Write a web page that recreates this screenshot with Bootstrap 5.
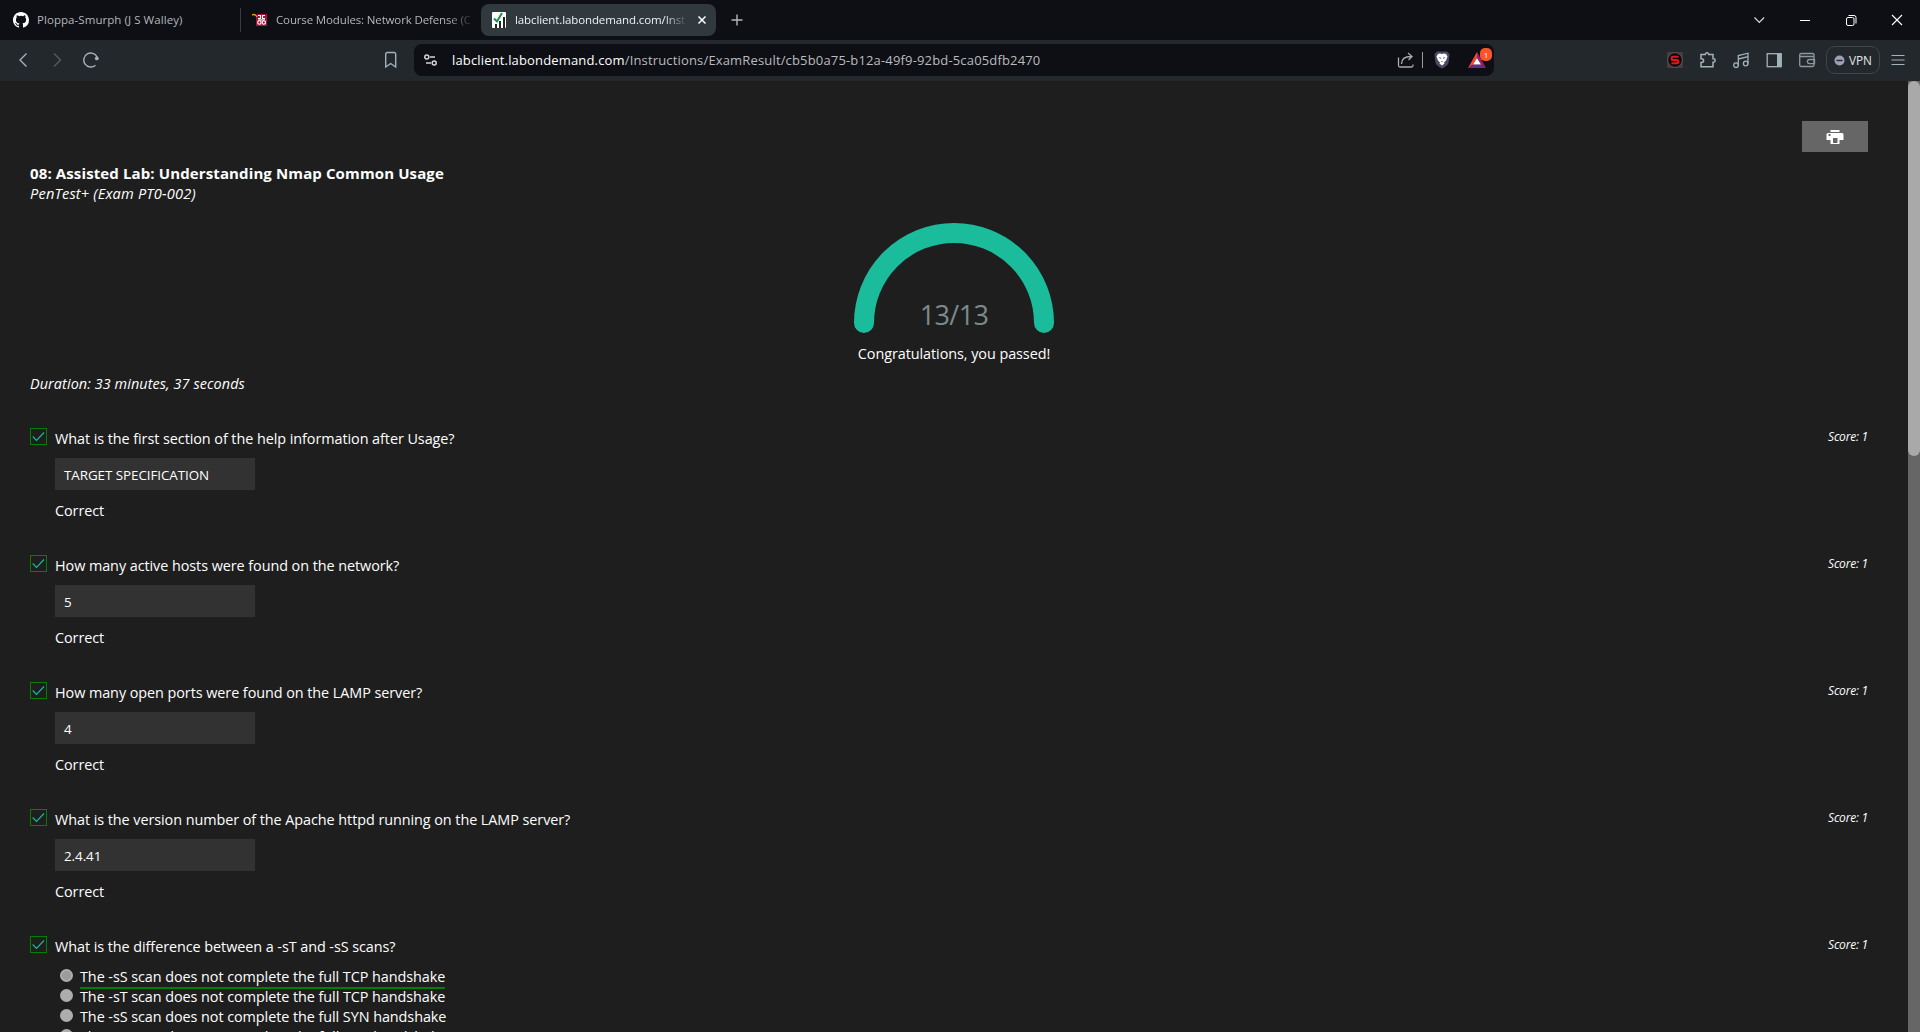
<!DOCTYPE html>
<html lang="en">
<head>
<meta charset="utf-8">
<title>Exam Result</title>
<link rel="stylesheet" href="https://cdn.jsdelivr.net/npm/bootstrap@5.3.0/dist/css/bootstrap.min.css">
<style>
html,body{height:100%;overflow:hidden}
body{background:#1e1e1e;color:#fff;font-family:"Open Sans","Noto Sans",sans-serif;font-size:14.4px;line-height:20px;letter-spacing:-.06px}
svg{display:block;flex:none}
.tabstrip{height:40px;background:#0e0f14;font-size:11.5px;color:#b4b6b9}
.tab-a{width:240px;padding:0 12px 0 13px;letter-spacing:.06px}
.tab-b{width:240px;padding:0 6px 0 11px;letter-spacing:-.14px}
.tab-sep{width:1px;height:24px;background:#3a3c41}
.tab-on{width:235px;height:32px;border-radius:8px;background:#30393d;color:#f0f1f2;padding:0 8px 0 10px;letter-spacing:-.11px}
.fade-end{overflow:hidden;-webkit-mask-image:linear-gradient(90deg,#000 86%,transparent);mask-image:linear-gradient(90deg,#000 86%,transparent)}
.new-tab{margin-left:15px}
.win-tools{gap:30px;padding-right:15px}
.toolbar{height:41px;padding-bottom:1px;background:#22282b;color:#a2b2ba}
.nav-tools{width:414px;padding:0 15px 0 15px;gap:18px}
.omni{width:1080px;height:32px;border-radius:8px;background:#0e0f14;font-size:13px;letter-spacing:.16px;color:#b9bbbe;padding:0 8px 0 9px}
.omni-host{color:#fff}
.omni-url{margin-left:14px}
.omni-sep{width:1px;height:16px;background:#9a9ca0;margin:0 11px 0 8px}
.reward{margin-left:18px}
.reward-badge{position:absolute;left:12px;top:-4px;width:12px;height:13px;border-radius:5px;background:#fb542b;color:#fff;font-size:8px;line-height:13px;text-align:center}
.ext-tools{padding-right:15px}
.ext-icons{gap:15px;margin-right:10px}
.vpn{width:54px;height:28px;border:1px solid #3c474b;border-radius:9px;color:#e3e6e8;font-size:11.8px;gap:4px;margin-right:11px}
.page-area{height:951px}
.sheet{padding:40px 30px 0 30px}
.right-gap{padding-right:10px}
.print-btn{width:66px;height:31px;background:#666;border-radius:0;border:0;padding:0}
.exam-title{font-size:15px;line-height:20px;font-weight:700;letter-spacing:.12px;margin:11px 0 0}
.exam-sub{font-size:14.6px;letter-spacing:.18px}
.gauge{margin-top:20px;width:200px;height:110px}
.gauge-num{position:absolute;left:0;right:0;top:74px;font-size:27px;line-height:36px;letter-spacing:-.6px;color:#7b8a8b;text-align:center}
.verdict{margin-top:11px}
.duration{margin-top:10px;margin-bottom:34px;letter-spacing:.09px}
.question{height:127px}
.tick{margin-right:8px}
.q-text{padding-top:1px}
.score-tag{font-size:12px;line-height:17px;letter-spacing:-.22px}
.q-body{padding-left:25px}
.answer{width:200px;height:32px;background:#323232;color:#fff;font-size:13.4px;padding:7px 9px 5px;margin:9px 0 11px}
.options{padding:10px 0 0 5px}
.dot{width:13px;height:13px;border-radius:50%;background:#adadad;margin:2px 7px 0 0}
.dot-on{background:#9b9b9b;border:2px solid #adadad}
.right-opt{box-shadow:0 2px 0 #008000}
.scroll-track{width:12px;background:#666}
.scroll-thumb{height:375px;border-radius:6px;background:#a9a9a9}
</style>
<script src="https://cdn.jsdelivr.net/npm/bootstrap@5.3.0/dist/js/bootstrap.bundle.min.js"></script>
</head>
<body>
<header>
<div class="tabstrip d-flex align-items-center">
  <div class="tab-a d-flex align-items-center">
    <svg width="16" height="16" viewBox="0 0 16 16"><path fill="#fff" d="M8 0C3.58 0 0 3.58 0 8c0 3.54 2.29 6.53 5.47 7.59.4.07.55-.17.55-.38 0-.19-.01-.82-.01-1.49-2.01.37-2.53-.49-2.69-.94-.09-.23-.48-.94-.82-1.13-.28-.15-.68-.52-.01-.53.63-.01 1.08.58 1.23.82.72 1.21 1.87.87 2.33.66.07-.52.28-.87.51-1.07-1.78-.2-3.64-.89-3.64-3.95 0-.87.31-1.59.82-2.15-.08-.2-.36-1.02.08-2.12 0 0 .67-.21 2.2.82a7.6 7.6 0 0 1 4 0c1.53-1.04 2.2-.82 2.2-.82.44 1.1.16 1.92.08 2.12.51.56.82 1.27.82 2.15 0 3.07-1.87 3.75-3.65 3.95.29.25.54.73.54 1.48 0 1.07-.01 1.93-.01 2.2 0 .21.15.46.55.38A8 8 0 0 0 16 8c0-4.42-3.58-8-8-8z"/></svg>
    <span class="ms-2">Ploppa-Smurph (J S Walley)</span>
  </div>
  <div class="tab-sep"></div>
  <div class="tab-b d-flex align-items-center">
    <svg width="16" height="16" viewBox="0 0 16 16"><path fill="#a8123a" d="M5 2h10v12H4V6z"/><path fill="none" stroke="#e8a01c" stroke-width="1.400" d="M0 3q3-1.500 5 2"/><g fill="none" stroke="#fff" stroke-width="1.100"><path d="M6 3.500h2.500v3H6M13 3.500h-2.500v3H13"/><circle cx="7.400" cy="10.500" r="1.700"/><circle cx="11.800" cy="10.500" r="1.700"/><path d="M6 8h7"/></g></svg>
    <div class="fade-end text-nowrap ms-2 flex-fill">Course Modules: Network Defense (C</div>
  </div>
  <div class="tab-on d-flex align-items-center">
    <svg width="16" height="16" viewBox="0 0 16 16"><rect x="1" width="14" height="16" rx="1" fill="#fff"/><path fill="#222" d="M4 12h2v4H4zM8 9h2v7H8zM12 5h2v11h-2z"/><path fill="none" stroke="#15924a" stroke-width="2" d="M3 6.500l3 3 5-8.500"/></svg>
    <div class="fade-end text-nowrap flex-fill ms-2">labclient.labondemand.com/Inst</div>
    <svg class="ms-2" width="12" height="12" viewBox="0 0 12 12"><path stroke="#fff" stroke-width="1.500" d="M2.500 2.500l7 7M9.500 2.500l-7 7"/></svg>
  </div>
  <svg class="new-tab" width="12" height="12" viewBox="0 0 12 12"><path stroke="#b4b6b9" stroke-width="1.400" d="M6 .5v11M.5 6h11"/></svg>
  <div class="win-tools ms-auto d-flex align-items-center">
    <svg width="16" height="16" viewBox="0 0 16 16"><path fill="none" stroke="#d6d7d9" stroke-width="1.200" d="M3.500 5.500l4.800 5 4.800-5"/></svg>
    <svg width="16" height="16" viewBox="0 0 16 16"><path stroke="#fff" d="M3 8.500h10"/></svg>
    <svg width="16" height="16" viewBox="0 0 16 16"><g fill="none" stroke="#fff"><rect x="3.500" y="5.500" width="7.500" height="8" rx="1.500"/><path d="M5.500 3.500h5.500a2 2 0 0 1 2 2v6"/></g></svg>
    <svg width="16" height="16" viewBox="0 0 16 16"><path stroke="#fff" stroke-width="1.100" d="M3 3l10 10M13 3L3 13"/></svg>
  </div>
</div>
<div class="toolbar d-flex align-items-center">
  <div class="nav-tools d-flex align-items-center">
    <svg width="16" height="16" viewBox="0 0 16 16"><path fill="none" stroke="#a2b2ba" stroke-width="1.400" d="M11.500 1.500L5 8l6.500 6.500"/></svg>
    <svg width="16" height="16" viewBox="0 0 16 16"><path fill="none" stroke="#525b60" stroke-width="1.400" d="M5 1.500L11.500 8 5 14.500"/></svg>
    <svg width="17" height="16" viewBox="0 0 17 16"><path fill="none" stroke="#a2b2ba" stroke-width="1.400" d="M12.500 13.200A7 7 0 1 1 14.200 5.200"/><circle cx="13.800" cy="6.400" r="1.900" fill="#a2b2ba"/></svg>
    <svg class="ms-auto" width="16" height="18" viewBox="0 0 16 18"><path fill="none" stroke="#a2b2ba" stroke-width="1.400" d="M2.700 3a1.500 1.500 0 0 1 1.500-1.500h7A1.500 1.500 0 0 1 12.700 3v13l-5-3.500-5 3.500z"/></svg>
  </div>
  <div class="omni d-flex align-items-center">
    <svg width="15" height="14" viewBox="0 0 15 14"><g fill="none" stroke="#d2d4d6" stroke-width="1.500"><circle cx="3.800" cy="4" r="2"/><path d="M7 4h5M3 10h5"/><circle cx="11.200" cy="10" r="2"/></g></svg>
    <span class="omni-url"><span class="omni-host">labclient.labondemand.com</span>/Instructions/ExamResult/cb5b0a75-b12a-49f9-92bd-5ca05dfb2470</span>
    <div class="ms-auto d-flex align-items-center">
      <svg width="17" height="16" viewBox="0 0 17 16"><g fill="none" stroke="#a9abae" stroke-width="1.300"><path d="M1.500 5.500v8a1.500 1.500 0 0 0 1.500 1.500h11.500a1.500 1.500 0 0 0 1.500-1.500v-1"/><path d="M4.500 12c0-5 3-7.500 9.500-7.500M11 1l4 3.500L11.500 8"/></g></svg>
      <div class="omni-sep"></div>
      <svg width="16" height="18" viewBox="0 0 16 18"><path fill="#4b4a64" d="M3 .5h10L15.500 3l-1 9c-1 2.500-4 4.500-6.500 5.500-2.500-1-5.500-3-6.500-5.500L.5 3z"/><path fill="#fff" d="M4 3l2-.5 2 .5 2-.5 2 .5 1.500 2.500-1.500 4-2 2 .5 1L8 14.500 5.500 12.500l.5-1-2-2-1.500-4z"/><path fill="#4b4a64" d="M4.500 6l2.500.800-.5 1.200zM11.500 6L9 6.800l.5 1.200zM7 10h2l-1 1z"/></svg>
      <div class="reward position-relative"><svg width="18" height="16" viewBox="0 0 18 16"><path fill="#ff4724" d="M9 0L0 16l5-3.500 4-7z"/><path fill="#662d91" d="M0 16h18l-5-3.500H5z"/><path fill="#9e1f63" d="M9 0l9 16-5-3.500-4-7z"/><path fill="#fff" d="M9 6l4 6.500H5z"/></svg><span class="reward-badge">1</span></div>
    </div>
  </div>
  <div class="ext-tools ms-auto d-flex align-items-center">
    <div class="ext-icons d-flex align-items-center">
      <svg width="18" height="18" viewBox="0 0 18 18"><rect x="1" y="1" width="16" height="16" fill="#493b3d"/><circle cx="9" cy="9" r="7.300" fill="#0c0c0e" stroke="#6a5a5c" stroke-width=".8"/><path fill="none" stroke="#e8141c" stroke-width="2" d="M12.500 5.800H7.200a1.600 1.600 0 0 0 0 3.200h3.600a1.600 1.600 0 0 1 0 3.200H5.500"/></svg>
      <svg width="18" height="18" viewBox="0 0 18 18"><path fill="none" stroke="#a2b2ba" stroke-width="1.500" d="M2 3.500h4.300V3a1.800 1.800 0 0 1 3.400 0v.5H14v4.300h.5a1.700 1.700 0 0 1 0 3.400H14v4.600H2v-4.300h.7a1.900 1.900 0 0 0 0-3.800H2z"/></svg>
      <svg width="18" height="18" viewBox="0 0 18 18"><g fill="none" stroke="#a2b2ba" stroke-width="1.300"><circle cx="4" cy="14.200" r="2.300"/><circle cx="13.700" cy="12.500" r="2.300"/><path d="M6.300 14.200V4.500L16 2.200v10.300M6.300 8L16 5.700"/></g></svg>
      <svg width="18" height="18" viewBox="0 0 18 18"><rect x="2.200" y="2.700" width="14" height="13" fill="none" stroke="#a2b2ba" stroke-width="1.300"/><path fill="#a2b2ba" d="M12 2.500h4.500v13.500H12z"/></svg>
      <svg width="18" height="18" viewBox="0 0 18 18"><g fill="none" stroke="#8b999f" stroke-width="1.300"><path d="M16 6V3.500A1.500 1.500 0 0 0 14.500 2.500H3A1.500 1.500 0 0 0 1.700 4v10a1.500 1.500 0 0 0 1.500 1.500h11.300A1.500 1.500 0 0 0 16 14V6.500a1 1 0 0 0-1-1H2"/><path d="M16.500 8.500h-5a2 2 0 0 0 0 4.200h5z"/></g></svg>
    </div>
    <div class="vpn d-flex align-items-center justify-content-center">
      <svg width="11" height="11" viewBox="0 0 11 11"><circle cx="5.500" cy="5.500" r="5" fill="#9d9fb5"/><path stroke="#22282b" stroke-width="1.400" d="M2.500 5.500h6"/></svg>
      <span>VPN</span>
    </div>
    <svg width="14" height="12" viewBox="0 0 14 12"><path stroke="#a2b2ba" stroke-width="1.200" d="M.5 1.500h13M.5 6h13M.5 10.500h13"/></svg>
  </div>
</div>
</header>
<main class="page-area d-flex">
<div class="sheet flex-fill overflow-hidden">
  <div class="right-gap d-flex justify-content-end"><button class="btn print-btn d-flex align-items-center justify-content-center" aria-label="Print"><svg width="18" height="14" viewBox="0 0 18 14"><path fill="#fff" fill-rule="evenodd" d="M4.500 0h9v2h-9zM2 3h14a1.500 1.500 0 0 1 1.500 1.500V10h-4v4h-9v-4h-4V4.500A1.500 1.500 0 0 1 2 3zM7 8v5h4.500V8zM2.500 4v2h2V4z"/></svg></button></div>
  <h1 class="exam-title">08: Assisted Lab: Understanding Nmap Common Usage</h1>
  <div class="exam-sub fst-italic">PenTest+ (Exam PT0-002)</div>
  <div class="gauge position-relative mx-auto"><svg width="200" height="110"><path fill="none" stroke="#1abc9c" stroke-width="20" stroke-linecap="round" d="M10 100a90 90 0 0 1 180 0"/></svg><div class="gauge-num">13/13</div></div>
  <div class="verdict text-center">Congratulations, you passed!</div>
  <div class="duration fst-italic">Duration: 33 minutes, 37 seconds</div>

  <section class="question">
    <div class="right-gap d-flex align-items-start"><svg class="tick" width="17" height="17" viewBox="0 0 17 17"><rect x=".5" y=".5" width="16" height="16" fill="none" stroke="#008000"/><path fill="none" stroke="#1abc9c" stroke-width="1.100" d="M2.700 8.500l3.800 4L14 4.500"/></svg><div class="q-text">What is the first section of the help information after Usage?</div><div class="score-tag fst-italic ms-auto">Score: 1</div></div>
    <div class="q-body"><div class="answer">TARGET SPECIFICATION</div><div>Correct</div></div>
  </section>
  <section class="question">
    <div class="right-gap d-flex align-items-start"><svg class="tick" width="17" height="17" viewBox="0 0 17 17"><rect x=".5" y=".5" width="16" height="16" fill="none" stroke="#008000"/><path fill="none" stroke="#1abc9c" stroke-width="1.100" d="M2.700 8.500l3.800 4L14 4.500"/></svg><div class="q-text">How many active hosts were found on the network?</div><div class="score-tag fst-italic ms-auto">Score: 1</div></div>
    <div class="q-body"><div class="answer">5</div><div>Correct</div></div>
  </section>
  <section class="question">
    <div class="right-gap d-flex align-items-start"><svg class="tick" width="17" height="17" viewBox="0 0 17 17"><rect x=".5" y=".5" width="16" height="16" fill="none" stroke="#008000"/><path fill="none" stroke="#1abc9c" stroke-width="1.100" d="M2.700 8.500l3.800 4L14 4.500"/></svg><div class="q-text">How many open ports were found on the LAMP server?</div><div class="score-tag fst-italic ms-auto">Score: 1</div></div>
    <div class="q-body"><div class="answer">4</div><div>Correct</div></div>
  </section>
  <section class="question">
    <div class="right-gap d-flex align-items-start"><svg class="tick" width="17" height="17" viewBox="0 0 17 17"><rect x=".5" y=".5" width="16" height="16" fill="none" stroke="#008000"/><path fill="none" stroke="#1abc9c" stroke-width="1.100" d="M2.700 8.500l3.800 4L14 4.500"/></svg><div class="q-text">What is the version number of the Apache httpd running on the LAMP server?</div><div class="score-tag fst-italic ms-auto">Score: 1</div></div>
    <div class="q-body"><div class="answer">2.4.41</div><div>Correct</div></div>
  </section>
  <section class="question">
    <div class="right-gap d-flex align-items-start"><svg class="tick" width="17" height="17" viewBox="0 0 17 17"><rect x=".5" y=".5" width="16" height="16" fill="none" stroke="#008000"/><path fill="none" stroke="#1abc9c" stroke-width="1.100" d="M2.700 8.500l3.800 4L14 4.500"/></svg><div class="q-text">What is the difference between a -sT and -sS scans?</div><div class="score-tag fst-italic ms-auto">Score: 1</div></div>
    <div class="q-body"><div class="options">
      <div class="d-flex"><span class="dot dot-on"></span><span class="right-opt">The -sS scan does not complete the full TCP handshake</span></div>
      <div class="d-flex"><span class="dot"></span><span>The -sT scan does not complete the full TCP handshake</span></div>
      <div class="d-flex"><span class="dot"></span><span>The -sS scan does not complete the full SYN handshake</span></div>
      <div class="d-flex"><span class="dot"></span><span>The -sT scan does not complete the full SYN handshake</span></div>
    </div></div>
  </section>
</div>
<div class="scroll-track"><div class="scroll-thumb"></div></div>
</main>
</body>
</html>
